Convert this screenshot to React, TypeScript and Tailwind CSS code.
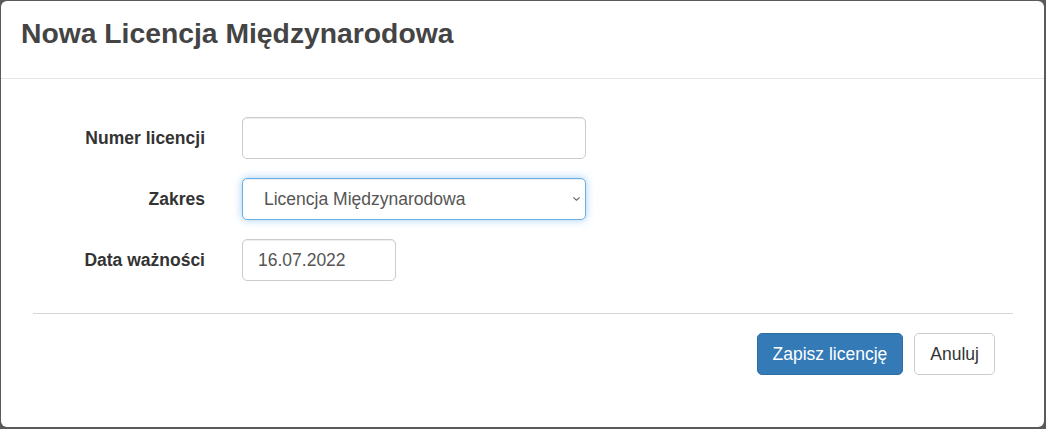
import React, { useState } from 'react';

const font = { fontFamily: '"Liberation Sans", Arial, Helvetica, sans-serif' };

function FormRow({ label, children }: { label: string; children: React.ReactNode }) {
  return (
    <div className="flex h-[42px] items-center">
      <label className="w-[204px] pr-0 text-right text-[17.5px] font-bold text-[#333]">{label}</label>
      <div className="ml-[37px] flex h-full items-center">{children}</div>
    </div>
  );
}

export default function App() {
  const [numer, setNumer] = useState('');
  const [zakres, setZakres] = useState('miedzynarodowa');
  const [data, setData] = useState('16.07.2022');

  return (
    <div className="h-[429px] w-[1046px] overflow-hidden bg-[#5a5a5a] pl-px pt-px" style={font}>
      <div className="flex h-[426px] w-[1043px] flex-col rounded-[6px] bg-white">
        {/* header */}
        <div className="h-[78px] border-b border-[#e5e5e5] pl-[20px] pt-[16px]">
          <h3 className="text-[28.3px] leading-[32px] font-bold text-[#444]">Nowa Licencja Międzynarodowa</h3>
        </div>

        {/* body */}
        <div className="flex flex-col gap-[19px] pt-[38px]">
          <FormRow label="Numer licencji">
            <input
              value={numer}
              onChange={e => setNumer(e.target.value)}
              className="h-[42px] w-[344px] rounded-[5px] border border-[#ccc] px-[15px] text-[17.5px] text-[#555] shadow-[inset_0_1px_1px_rgba(0,0,0,0.075)] outline-none"
            />
          </FormRow>
          <FormRow label="Zakres">
            <div className="relative">
              <select
                value={zakres}
                onChange={e => setZakres(e.target.value)}
                className="h-[42px] w-[344px] appearance-none rounded-[5px] border border-[#66afe9] bg-white pl-[21px] text-[17.5px] text-[#555] shadow-[inset_0_1px_1px_rgba(0,0,0,0.075),0_0_8px_rgba(102,175,233,0.6)] outline-none"
              >
                <option value="miedzynarodowa">Licencja Międzynarodowa</option>
                <option value="krajowa">Licencja Krajowa</option>
              </select>
              <svg className="pointer-events-none absolute right-[5px] top-[18px]" width="9" height="6" viewBox="0 0 10 6">
                <path d="M1.5 1.2l3.5 3.2 3.5-3.2" fill="none" stroke="#666" strokeWidth="1.3" />
              </svg>
            </div>
          </FormRow>
          <FormRow label="Data ważności">
            <input
              value={data}
              onChange={e => setData(e.target.value)}
              className="h-[42px] w-[154px] rounded-[5px] border border-[#ccc] px-[15px] text-[17.5px] text-[#555] shadow-[inset_0_1px_1px_rgba(0,0,0,0.075)] outline-none"
            />
          </FormRow>
        </div>

        <div className="ml-[32px] mt-[32px] h-px w-[980px] bg-[#d5d5d5]" />

        {/* footer */}
        <div className="mr-[49px] mt-[19px] flex justify-end gap-[11px]">
          <button className="h-[42px] rounded-[5px] border border-[#2e6da4] bg-[#337ab7] px-[15px] text-[17.5px] text-white">
            Zapisz licencję
          </button>
          <button className="h-[42px] rounded-[5px] border border-[#ccc] bg-white px-[15px] text-[17.5px] text-[#333]">
            Anuluj
          </button>
        </div>
      </div>
    </div>
  );
}
